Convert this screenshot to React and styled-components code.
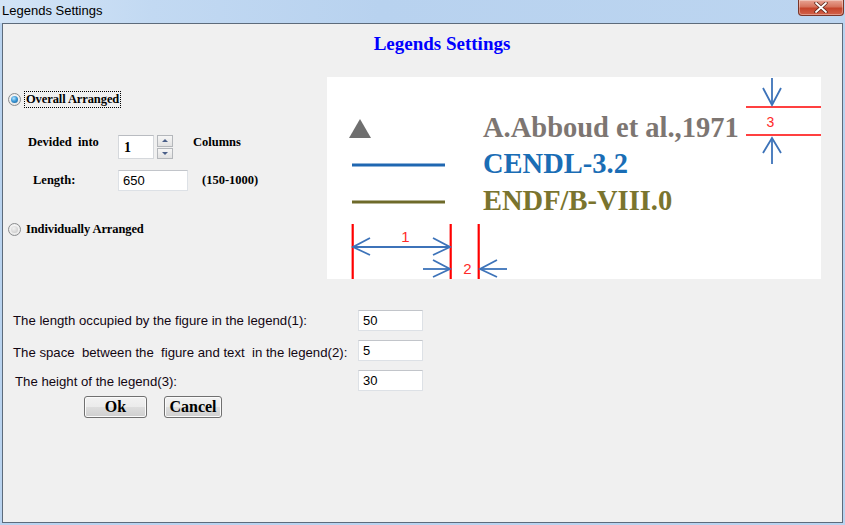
import React from 'react';
import styled, { createGlobalStyle } from 'styled-components';

// global:

const GlobalStyle = createGlobalStyle`
    html, body {
        margin: 0;
        padding: 0;
    }
    body {
        width: 845px;
        height: 525px;
        overflow: hidden;
        background: #b9d3ef;
        font-family: "Liberation Sans", Arial, sans-serif;
    }
`;

// legend preview drawing:

const ARROW = '#3d73b9';
const RED = '#ff0000';

const LegendPreview = () => (
    <PreviewBox>
        <svg width="494" height="202" viewBox="0 0 494 202">
            <rect width="494" height="202" fill="#ffffff" />

            <polygon points="22,61 33,42 44,61" fill="#6f6f6f" />
            <line x1="25" y1="88" x2="118" y2="88" stroke="#1f67b1" strokeWidth="3" />
            <line x1="25" y1="125" x2="118" y2="125" stroke="#6e6a2a" strokeWidth="3" />

            <g fontFamily='"Liberation Serif", "Times New Roman", serif' fontWeight="bold" fontSize="28.5">
                <text x="156" y="60" fill="#7d7672">A.Abboud et al.,1971</text>
                <text x="156" y="96" fill="#1a6db5">CENDL-3.2</text>
                <text x="156" y="133" fill="#7a742e">ENDF/B-VIII.0</text>
            </g>

            <line x1="419" y1="30" x2="494" y2="30" stroke={RED} strokeWidth="1.6" />
            <line x1="419" y1="58" x2="494" y2="58" stroke={RED} strokeWidth="1.6" />
            <line x1="445" y1="1" x2="445" y2="28" stroke={ARROW} strokeWidth="1.8" />
            <polyline points="436,11 445,28 454,11" fill="none" stroke={ARROW} strokeWidth="1.8" />
            <line x1="445" y1="61" x2="445" y2="87" stroke={ARROW} strokeWidth="1.8" />
            <polyline points="436,76 445,61 454,76" fill="none" stroke={ARROW} strokeWidth="1.8" />

            <line x1="25.7" y1="147" x2="25.7" y2="202" stroke={RED} strokeWidth="2.2" />
            <line x1="123.7" y1="147" x2="123.7" y2="202" stroke={RED} strokeWidth="2.2" />
            <line x1="151.7" y1="147" x2="151.7" y2="202" stroke={RED} strokeWidth="2.2" />

            <line x1="26" y1="170" x2="123" y2="170" stroke={ARROW} strokeWidth="1.8" />
            <polyline points="43,161 26,170 43,178" fill="none" stroke={ARROW} strokeWidth="1.8" />
            <polyline points="106,161 123,170 106,178" fill="none" stroke={ARROW} strokeWidth="1.8" />

            <line x1="96" y1="192" x2="123" y2="192" stroke={ARROW} strokeWidth="1.8" />
            <polyline points="106,183 123,192 106,200" fill="none" stroke={ARROW} strokeWidth="1.8" />
            <line x1="180" y1="192" x2="153" y2="192" stroke={ARROW} strokeWidth="1.8" />
            <polyline points="170,183 153,192 170,200" fill="none" stroke={ARROW} strokeWidth="1.8" />

            <g fontFamily='"Liberation Sans", Arial, sans-serif' fill="#ff2a2a" textAnchor="middle">
                <text x="78.5" y="165" fontSize="15">1</text>
                <text x="140.5" y="197" fontSize="15">2</text>
                <text x="443.5" y="50" fontSize="14">3</text>
            </g>
        </svg>
    </PreviewBox>
);

// component:

const App = () => (
    <>
        <GlobalStyle />
        <Window>
            <TitleBar>
                <TitleText>Legends Settings</TitleText>
                <CloseButton>
                    <svg width="14" height="11" viewBox="0 0 14 11">
                        <path d="M2 1 L12 10 M12 1 L2 10" stroke="#5a2418" strokeWidth="3.4" strokeLinecap="round" />
                        <path d="M2 1 L12 10 M12 1 L2 10" stroke="#ffffff" strokeWidth="1.8" strokeLinecap="round" />
                    </svg>
                </CloseButton>
            </TitleBar>

            <Client>
                <Heading>Legends Settings</Heading>

                <TopRow>
                    <LeftCol>
                        <RadioRow>
                            <Radio $checked />
                            <RadioLabel $focused>Overall Arranged</RadioLabel>
                        </RadioRow>

                        <FieldRow $top={27} $height={24}>
                            <FieldLabel $indent={25} $alignTop>Devided  into</FieldLabel>
                            <SpinBox>
                                <SpinInput>1</SpinInput>
                                <SpinButtons>
                                    <SpinButton><Arrow $up /></SpinButton>
                                    <SpinButton><Arrow /></SpinButton>
                                </SpinButtons>
                            </SpinBox>
                            <FieldNote $gap={20} $alignTop>Columns</FieldNote>
                        </FieldRow>

                        <FieldRow $top={11} $height={21}>
                            <FieldLabel $indent={30}>Length:</FieldLabel>
                            <TextInput $width={70} readOnly defaultValue="650" />
                            <FieldNote $gap={14}>(150-1000)</FieldNote>
                        </FieldRow>

                        <RadioRow $top={30}>
                            <Radio />
                            <RadioLabel>Individually Arranged</RadioLabel>
                        </RadioRow>
                    </LeftCol>

                    <LegendPreview />
                </TopRow>

                <FormGrid>
                    <FormLabel>The length occupied by the figure in the legend(1):</FormLabel>
                    <TextInput $width={65} readOnly defaultValue="50" />
                    <FormLabel $shift={2}>The space&nbsp; between the&nbsp; figure and text&nbsp; in the legend(2):</FormLabel>
                    <TextInput $width={65} readOnly defaultValue="5" />
                    <FormLabel $indent={2} $shift={1}>The height of the legend(3):</FormLabel>
                    <TextInput $width={65} readOnly defaultValue="30" />
                </FormGrid>

                <ButtonRow>
                    <Button $width={63}>Ok</Button>
                    <Button $width={58}>Cancel</Button>
                </ButtonRow>
            </Client>
        </Window>
    </>
);

export default App;

// styled components:

const Window = styled.div`
    width: 845px;
    height: 525px;
    display: flex;
    flex-direction: column;
    box-sizing: border-box;
`;

const TitleBar = styled.div`
    height: 23px;
    flex: none;
    display: flex;
    justify-content: space-between;
    align-items: flex-start;
    background: linear-gradient(to right, #d3e4f6 0%, #c2d9f2 18%, #b8d2ef 45%, #bcd5f0 100%);
`;

const TitleText = styled.div`
    padding-left: 2px;
    line-height: 21px;
    font-size: 13px;
    color: #000;
`;

const CloseButton = styled.div`
    width: 46px;
    height: 16px;
    margin-right: 1px;
    box-sizing: border-box;
    display: flex;
    align-items: center;
    justify-content: center;
    border: 1px solid #7a3528;
    border-top: none;
    border-radius: 0 0 4px 4px;
    background: linear-gradient(#e8a494 0%, #d6735d 45%, #c5442b 55%, #d2624a 100%);
    box-shadow: inset 0 0 0 1px rgba(255, 255, 255, 0.35);
`;

const Client = styled.div`
    flex: 1;
    margin: 0 2px 2px 2px;
    border: 1px solid #5d6b7b;
    background: #f0f0f0;
    display: flex;
    flex-direction: column;
`;

const Heading = styled.div`
    padding-top: 8px;
    padding-left: 39px;
    text-align: center;
    line-height: 24px;
    font-family: "Liberation Serif", "Times New Roman", serif;
    font-weight: bold;
    font-size: 19px;
    color: #0000ff;
`;

const TopRow = styled.div`
    margin-top: 21px;
    display: grid;
    grid-template-columns: 324px 494px;
    align-items: start;
`;

const LeftCol = styled.div`
    padding-top: 14px;
    display: flex;
    flex-direction: column;
`;

const RadioRow = styled.div`
    height: 17px;
    margin-top: ${p => p.$top || 0}px;
    padding-left: 5px;
    display: flex;
    align-items: center;
    gap: 3px;
`;

const Radio = styled.span`
    position: relative;
    width: 13px;
    height: 13px;
    box-sizing: border-box;
    border-radius: 50%;
    border: 1px solid #8a8c8e;
    background: radial-gradient(circle at 50% 40%, #ffffff 0%, #e9e9e9 70%, #d5d5d5 100%);
    display: flex;
    align-items: center;
    justify-content: center;

    &::after {
        content: '';
        width: 7px;
        height: 7px;
        border-radius: 50%;
        background: ${p => p.$checked
            ? 'radial-gradient(circle at 40% 35%, #b8e6ff 0%, #3d9ad8 45%, #13598f 100%)'
            : 'radial-gradient(circle at 40% 35%, #f2f2f2 0%, #d6d6d6 60%, #c4c4c4 100%)'};
    }
`;

const RadioLabel = styled.span`
    padding: 0 1px;
    line-height: 15px;
    border: 1px dotted ${p => (p.$focused ? '#000' : 'transparent')};
    font-family: "Liberation Serif", "Times New Roman", serif;
    font-weight: bold;
    font-size: 12.5px;
    letter-spacing: -0.1px;
    color: #000;
`;

const FieldRow = styled.div`
    height: ${p => p.$height}px;
    margin-top: ${p => p.$top}px;
    display: grid;
    grid-template-columns: 115px auto auto;
    justify-content: start;
    align-items: center;
`;

const FieldLabel = styled.div`
    padding-left: ${p => p.$indent}px;
    align-self: ${p => (p.$alignTop ? 'start' : 'center')};
    line-height: 15px;
    white-space: pre;
    font-family: "Liberation Serif", "Times New Roman", serif;
    font-weight: bold;
    font-size: 12.5px;
    color: #000;
`;

const FieldNote = styled(FieldLabel)`
    padding-left: ${p => p.$gap}px;
`;

const SpinBox = styled.div`
    display: flex;
    gap: 3px;
    height: 24px;
`;

const SpinInput = styled.div`
    width: 36px;
    height: 24px;
    box-sizing: border-box;
    padding: 4px 0 0 5px;
    background: #fff;
    border: 1px solid #d5d8dc;
    border-top-color: #b9bcc1;
    font-family: "Liberation Serif", "Times New Roman", serif;
    font-weight: bold;
    font-size: 14px;
    line-height: 15px;
    color: #000;
`;

const SpinButtons = styled.div`
    width: 16px;
    display: flex;
    flex-direction: column;
    gap: 1px;
`;

const SpinButton = styled.div`
    flex: 1;
    box-sizing: border-box;
    border: 1px solid #b4b7bb;
    background: linear-gradient(#f6f6f6, #e2e2e2);
    display: flex;
    align-items: center;
    justify-content: center;
`;

const Arrow = styled.span`
    width: 0;
    height: 0;
    border-left: 3px solid transparent;
    border-right: 3px solid transparent;
    ${p => (p.$up ? 'border-bottom: 3px solid #4a5f88;' : 'border-top: 3px solid #4a5f88;')}
`;

const TextInput = styled.input`
    width: ${p => p.$width}px;
    height: 21px;
    box-sizing: border-box;
    margin: 0;
    padding: 0 0 1px 4px;
    outline: none;
    background: #fff;
    border: 1px solid #dde1e6;
    border-top-color: #c2c5ca;
    font-family: "Liberation Sans", Arial, sans-serif;
    font-size: 13px;
    color: #000;
`;

const PreviewBox = styled.div`
    width: 494px;
    height: 202px;
    display: flex;
`;

const FormGrid = styled.div`
    margin-top: 31px;
    padding-left: 10px;
    display: grid;
    grid-template-columns: 345px 65px;
    row-gap: 9px;
    align-items: center;
`;

const FormLabel = styled.div`
    padding-left: ${p => p.$indent || 0}px;
    padding-top: ${p => (p.$shift || 0) * 2}px;
    font-family: "Liberation Sans", Arial, sans-serif;
    font-size: 13.2px;
    color: #120612;
    white-space: nowrap;
`;

const ButtonRow = styled.div`
    margin-top: 5px;
    padding-left: 81px;
    display: flex;
    gap: 17px;
`;

const Button = styled.div`
    width: ${p => p.$width}px;
    height: 22px;
    box-sizing: border-box;
    border: 1px solid #707070;
    border-radius: 3px;
    background: linear-gradient(#f2f2f2 0%, #ebebeb 50%, #dddddd 51%, #cfcfcf 100%);
    box-shadow: inset 0 0 0 1px #fbfbfb;
    display: flex;
    align-items: center;
    justify-content: center;
    font-family: "Liberation Serif", "Times New Roman", serif;
    font-weight: bold;
    font-size: 16px;
    color: #000;
    cursor: pointer;
`;
